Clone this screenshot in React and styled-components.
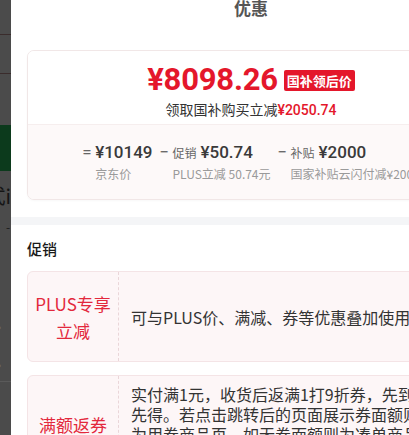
import styled, { createGlobalStyle } from "styled-components";

const GlobalStyle = createGlobalStyle`
  html, body {
    margin: 0;
    padding: 0;
    background: #ffffff;
  }
  body {
    font-family: "Noto Sans CJK SC", "Noto Sans", sans-serif;
  }
`;

const CJK = `"Noto Sans CJK SC", "Noto Sans", sans-serif`;
const NUM = `Roboto, "Noto Sans CJK SC", sans-serif`;

export default function App() {
  return (
    <>
      <GlobalStyle />
      <Screen>
        <Backdrop>
          <Dim h={34} />
          <Rule />
          <Dim h={38} />
          <Rule />
          <Dim h={51} />
          <GreenBlock />
          <Dim h={14} />
          <PeekText>方式i</PeekText>
          <Dim h={16} />
          <PeekDash>-</PeekDash>
          <Dim h={84} />
          <Chevron>›</Chevron>
          <Dim h={18} />
          <Chevron>›</Chevron>
          <Dim h={8} />
          <Rule light />
        </Backdrop>

        <Panel>
          <Title>优惠</Title>

          <PriceCard>
            <PriceTop>
              <PriceLine>
                <BigPrice>¥8098.26</BigPrice>
                <Tag>国补领后价</Tag>
              </PriceLine>
              <Subline>
                领取国补购买立减<RedAmount>¥2050.74</RedAmount>
              </Subline>
            </PriceTop>

            <Breakdown>
              <Item>
                <Op>=</Op>
                <Stack>
                  <TopLine>
                    <Amount>¥10149</Amount>
                  </TopLine>
                  <SubLabel>京东价</SubLabel>
                </Stack>
              </Item>
              <Item>
                <Op>−</Op>
                <Stack>
                  <TopLine>
                    <Label>促销</Label>
                    <Amount>¥50.74</Amount>
                  </TopLine>
                  <SubLabel>PLUS立减 50.74元</SubLabel>
                </Stack>
              </Item>
              <Item>
                <Op>−</Op>
                <Stack>
                  <TopLine>
                    <Label>补贴</Label>
                    <Amount>¥2000</Amount>
                  </TopLine>
                  <SubLabel>国家补贴云闪付减¥2000</SubLabel>
                </Stack>
              </Item>
            </Breakdown>
          </PriceCard>

          <Band />

          <SectionTitle>促销</SectionTitle>

          <PromoList>
            <PromoCard>
              <PromoName>
                PLUS专享
                <br />
                立减
              </PromoName>
              <PromoText>可与PLUS价、满减、券等优惠叠加使用</PromoText>
            </PromoCard>
            <PromoCard>
              <PromoName>满额返券</PromoName>
              <PromoText>
                实付满1元，收货后返满1打9折券，先到先得。若点击跳转后的页面展示券面额则为用券商品页，如无券面额则为凑单商品页。
              </PromoText>
            </PromoCard>
          </PromoList>
        </Panel>
      </Screen>
    </>
  );
}

const Screen = styled.div`
  width: 409px;
  height: 435px;
  overflow: hidden;
  display: flex;
  align-items: flex-start;
`;

const Backdrop = styled.div`
  width: 11px;
  height: 435px;
  flex-shrink: 0;
  background: #4b4b4b;
  display: flex;
  flex-direction: column;
  overflow: hidden;
  & > * {
    flex-shrink: 0;
  }
`;

const Dim = styled.div`
  height: ${(p) => p.h}px;
`;

const Rule = styled.div`
  height: 1px;
  background: ${(p) => (p.light ? "#5a5a5a" : "#3a2c2c")};
`;

const GreenBlock = styled.div`
  height: 46px;
  background: #0c3a1c;
`;

const PeekText = styled.div`
  height: 22px;
  display: flex;
  justify-content: flex-end;
  font-family: ${CJK};
  font-size: 20px;
  line-height: 22px;
  color: #151515;
  white-space: nowrap;
`;

const PeekDash = styled.div`
  height: 8px;
  font-family: ${CJK};
  font-size: 12px;
  line-height: 8px;
  color: #1a1a1a;
  padding-left: 6px;
`;

const Chevron = styled.div`
  height: 20px;
  font-family: ${CJK};
  font-size: 18px;
  line-height: 20px;
  color: #6a6a6a;
  margin-left: -4px;
`;

const Panel = styled.div`
  width: 480px;
  flex-shrink: 0;
  background: #ffffff;
  padding: 0 16px;
  box-sizing: border-box;
  display: flex;
  flex-direction: column;
  & > * {
    flex-shrink: 0;
  }
`;

const Title = styled.div`
  margin-top: -1px;
  font-family: ${CJK};
  font-size: 17px;
  line-height: 17px;
  font-weight: 700;
  color: #555555;
  text-align: center;
`;

const PriceCard = styled.div`
  margin-top: 34px;
  border: 1px solid #f1e7e7;
  border-radius: 7px;
  overflow: hidden;
  box-shadow: 0 1px 2px rgba(0, 0, 0, 0.03);
`;

const PriceTop = styled.div`
  display: flex;
  flex-direction: column;
  align-items: center;
  padding: 10px 0 4px;
  background: #ffffff;
  border-bottom: 1px solid #f6eeee;
`;

const PriceLine = styled.div`
  display: flex;
  align-items: center;
  gap: 6px;
  height: 36px;
`;

const BigPrice = styled.span`
  font-family: ${NUM};
  font-size: 31px;
  font-weight: 700;
  color: #e4172b;
  letter-spacing: -0.2px;
`;

const Tag = styled.span`
  background: #e4172b;
  color: #ffffff;
  font-family: ${CJK};
  font-size: 13px;
  font-weight: 700;
  line-height: 21px;
  padding: 0 3px;
  border-radius: 2px;
  margin-top: 3px;
`;

const Subline = styled.div`
  margin-top: 2px;
  font-family: ${CJK};
  font-size: 14px;
  line-height: 20px;
  color: #333333;
`;

const RedAmount = styled.span`
  font-family: ${NUM};
  font-weight: 500;
  color: #e4172b;
`;

const Breakdown = styled.div`
  display: flex;
  justify-content: center;
  gap: 7px;
  padding: 16px 0 16px;
  background: #fdf9f9;
`;

const Item = styled.div`
  display: flex;
  align-items: flex-start;
`;

const Op = styled.span`
  font-family: ${NUM};
  font-size: 17px;
  line-height: 22px;
  color: #666666;
  width: 13px;
`;

const Stack = styled.div`
  display: flex;
  flex-direction: column;
`;

const TopLine = styled.div`
  display: flex;
  align-items: center;
  gap: 4px;
  height: 22px;
`;

const Label = styled.span`
  font-family: ${CJK};
  font-size: 12px;
  color: #666666;
`;

const Amount = styled.span`
  font-family: ${NUM};
  font-size: 17px;
  font-weight: 500;
  color: #3a3a3a;
`;

const SubLabel = styled.span`
  margin-top: 2px;
  font-family: ${CJK};
  font-size: 12px;
  line-height: 18px;
  color: #9a9a9a;
  white-space: nowrap;
`;

const Band = styled.div`
  height: 8px;
  margin: 17px -16px 0;
  background: #f4f5f7;
`;

const SectionTitle = styled.div`
  margin-top: 16px;
  font-family: ${CJK};
  font-size: 15px;
  line-height: 16px;
  font-weight: 500;
  color: #1a1a1a;
`;

const PromoList = styled.div`
  margin-top: 14px;
  display: flex;
  flex-direction: column;
  gap: 13px;
`;

const PromoCard = styled.div`
  display: flex;
  min-height: 89px;
  background: #fdf6f7;
  border: 1px solid #f4e4e6;
  border-radius: 6px;
`;

const PromoName = styled.div`
  width: 90px;
  flex-shrink: 0;
  display: flex;
  align-items: center;
  justify-content: center;
  text-align: center;
  border-right: 1px dashed #ead6d9;
  font-family: ${CJK};
  font-size: 17px;
  line-height: 27px;
  color: #e3283c;
`;

const PromoText = styled.div`
  flex: 1;
  display: flex;
  align-items: center;
  padding: 8px 50px 8px 12px;
  font-family: ${CJK};
  font-size: 16px;
  line-height: 20px;
  color: #333333;
`;
